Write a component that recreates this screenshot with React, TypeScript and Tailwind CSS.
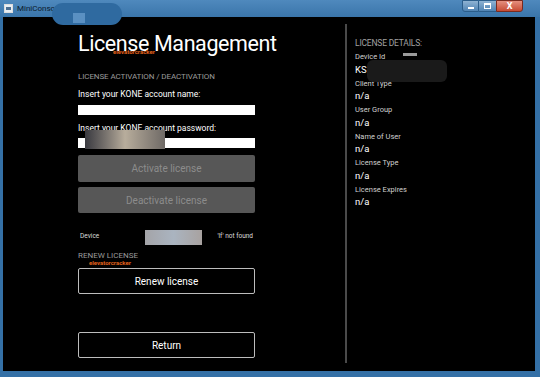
import React from "react";

const details = [
  { label: "Device Id", value: "KS" },
  { label: "Client Type", value: "n/a" },
  { label: "User Group", value: "n/a" },
  { label: "Name of User", value: "n/a" },
  { label: "License Type", value: "n/a" },
  { label: "License Expires", value: "n/a" },
];

export default function App() {
  return (
    <div
      className="relative flex h-[377px] w-[540px] flex-col overflow-hidden bg-[#3470a6]"
      style={{ fontFamily: "Roboto, 'Liberation Sans', sans-serif" }}
    >
      {/* Title bar */}
      <div className="flex h-[17px] items-center bg-gradient-to-b from-[#4f89bd] to-[#3a75aa] pl-[4px] pr-[17px]">
        <div className="flex h-[9px] w-[9px] items-center justify-center border border-[#ddd] bg-[#e8eef4]">
          <div className="h-[3px] w-[5px] bg-[#4c6f92]" />
        </div>
        <span className="ml-[4px] text-[8px] text-[#0b1a2a]">MiniConsole</span>
        <div className="ml-auto flex h-[12px] items-stretch self-start">
          <div className="flex w-[17px] items-center justify-center rounded-bl-[3px] border border-[#2b5d8a] bg-gradient-to-b from-[#8fb3d3] to-[#4f83b3]">
            <div className="mt-[4px] h-[2px] w-[6px] bg-white" />
          </div>
          <div className="flex w-[17px] items-center justify-center border-y border-[#2b5d8a] bg-gradient-to-b from-[#8fb3d3] to-[#4f83b3]">
            <div className="h-[6px] w-[7px] border border-t-2 border-white" />
          </div>
          <div className="flex w-[27px] items-center justify-center rounded-br-[3px] border border-[#7a2a1e] bg-gradient-to-b from-[#e58f7e] to-[#c64a33] text-[9px] font-bold leading-none text-white">
            X
          </div>
        </div>
      </div>

      {/* Client area */}
      <div className="ml-[3px] mr-[5px] flex h-[354px] bg-black">
        {/* Left column */}
        <div className="flex w-[342px] flex-col pl-[75px] pt-[14px]">
          <h1 className="text-[21.5px] leading-[26px] font-normal tracking-[-0.4px] text-white">
            License Management
          </h1>
          <p className="mt-[15px] text-[8px] leading-[10px] tracking-[-0.1px] text-[#9a9a9a]">
            LICENSE ACTIVATION / DEACTIVATION
          </p>
          <p className="mt-[7px] text-[8.5px] leading-[10px] text-white">
            Insert your KONE account name:
          </p>
          <div className="mt-[6px] h-[10px] w-[177px] bg-white" />
          <p className="mt-[8px] text-[8.5px] leading-[10px] text-white">
            Insert your KONE account password:
          </p>
          <div className="mt-[5px] h-[10px] w-[177px] bg-white" />
          <button className="mt-[7px] h-[27px] w-[177px] rounded-[2px] bg-[#575757] text-[10px] text-[#8c8c8c]">
            Activate license
          </button>
          <button className="mt-[5px] h-[26px] w-[177px] rounded-[2px] bg-[#575757] text-[10px] text-[#8c8c8c]">
            Deactivate license
          </button>
          <div className="mt-[18px] flex w-[177px] items-center justify-between px-[2px] text-[6.5px] leading-[10px] text-[#dcdcdc]">
            <span>Device</span>
            <span>'lf' not found</span>
          </div>
          <p className="mt-[10px] text-[8px] leading-[10px] text-[#9a9a9a]">RENEW LICENSE</p>
          <button className="mt-[7px] h-[26px] w-[177px] rounded-[2px] border border-[#bdbdbd] text-[10px] text-white">
            Renew license
          </button>
          <button className="mt-[38px] h-[26px] w-[177px] rounded-[2px] border border-[#bdbdbd] text-[10px] text-white">
            Return
          </button>
        </div>

        {/* Divider */}
        <div className="mt-[7px] h-[339px] w-[2px] bg-[#4a4a4a]" />

        {/* Right column */}
        <div className="flex flex-col pl-[8px] pt-[21px]">
          <p className="text-[8.5px] leading-[10px] tracking-[-0.2px] text-[#a0a0a0]">LICENSE DETAILS:</p>
          {details.map((d) => (
            <div key={d.label} className="flex flex-col">
              <span className="mt-[4px] text-[7.5px] leading-[10px] text-[#d0d0d0]">{d.label}</span>
              <span className="mt-[2.5px] text-[9.5px] leading-[10px] text-white">{d.value}</span>
            </div>
          ))}
        </div>
      </div>

      {/* Redaction marks over the capture */}
      <div className="absolute left-[52px] top-[3px] h-[22px] w-[70px] rounded-[12px] bg-[#2f6aa0]" />
      <div className="absolute left-[73px] top-[13px] h-[10px] w-[12px] bg-[#5a90c2]" />
      <div className="absolute left-[85px] top-[130px] h-[19px] w-[80px] bg-gradient-to-r from-[#3a3a40] via-[#b8ad9c] to-[#6f6a66]" />
      <div className="absolute left-[145px] top-[230px] h-[15px] w-[57px] bg-gradient-to-r from-[#a4a4a8] via-[#aab4c0] to-[#a8a2a0]" />
      <div className="absolute left-[367px] top-[60px] h-[22px] w-[80px] rounded-[6px] bg-[#1a1a1a]" />
      <div className="absolute left-[403px] top-[53px] h-[3px] w-[14px] bg-[#9a9a9a]" />

      {/* Watermark */}
      <span className="absolute left-[113px] top-[47px] text-[6px] font-bold text-[#e0621c]">elevatorcracker</span>
      <span className="absolute left-[89px] top-[258px] text-[6px] font-bold text-[#e0621c]">elevatorcracker</span>
    </div>
  );
}
